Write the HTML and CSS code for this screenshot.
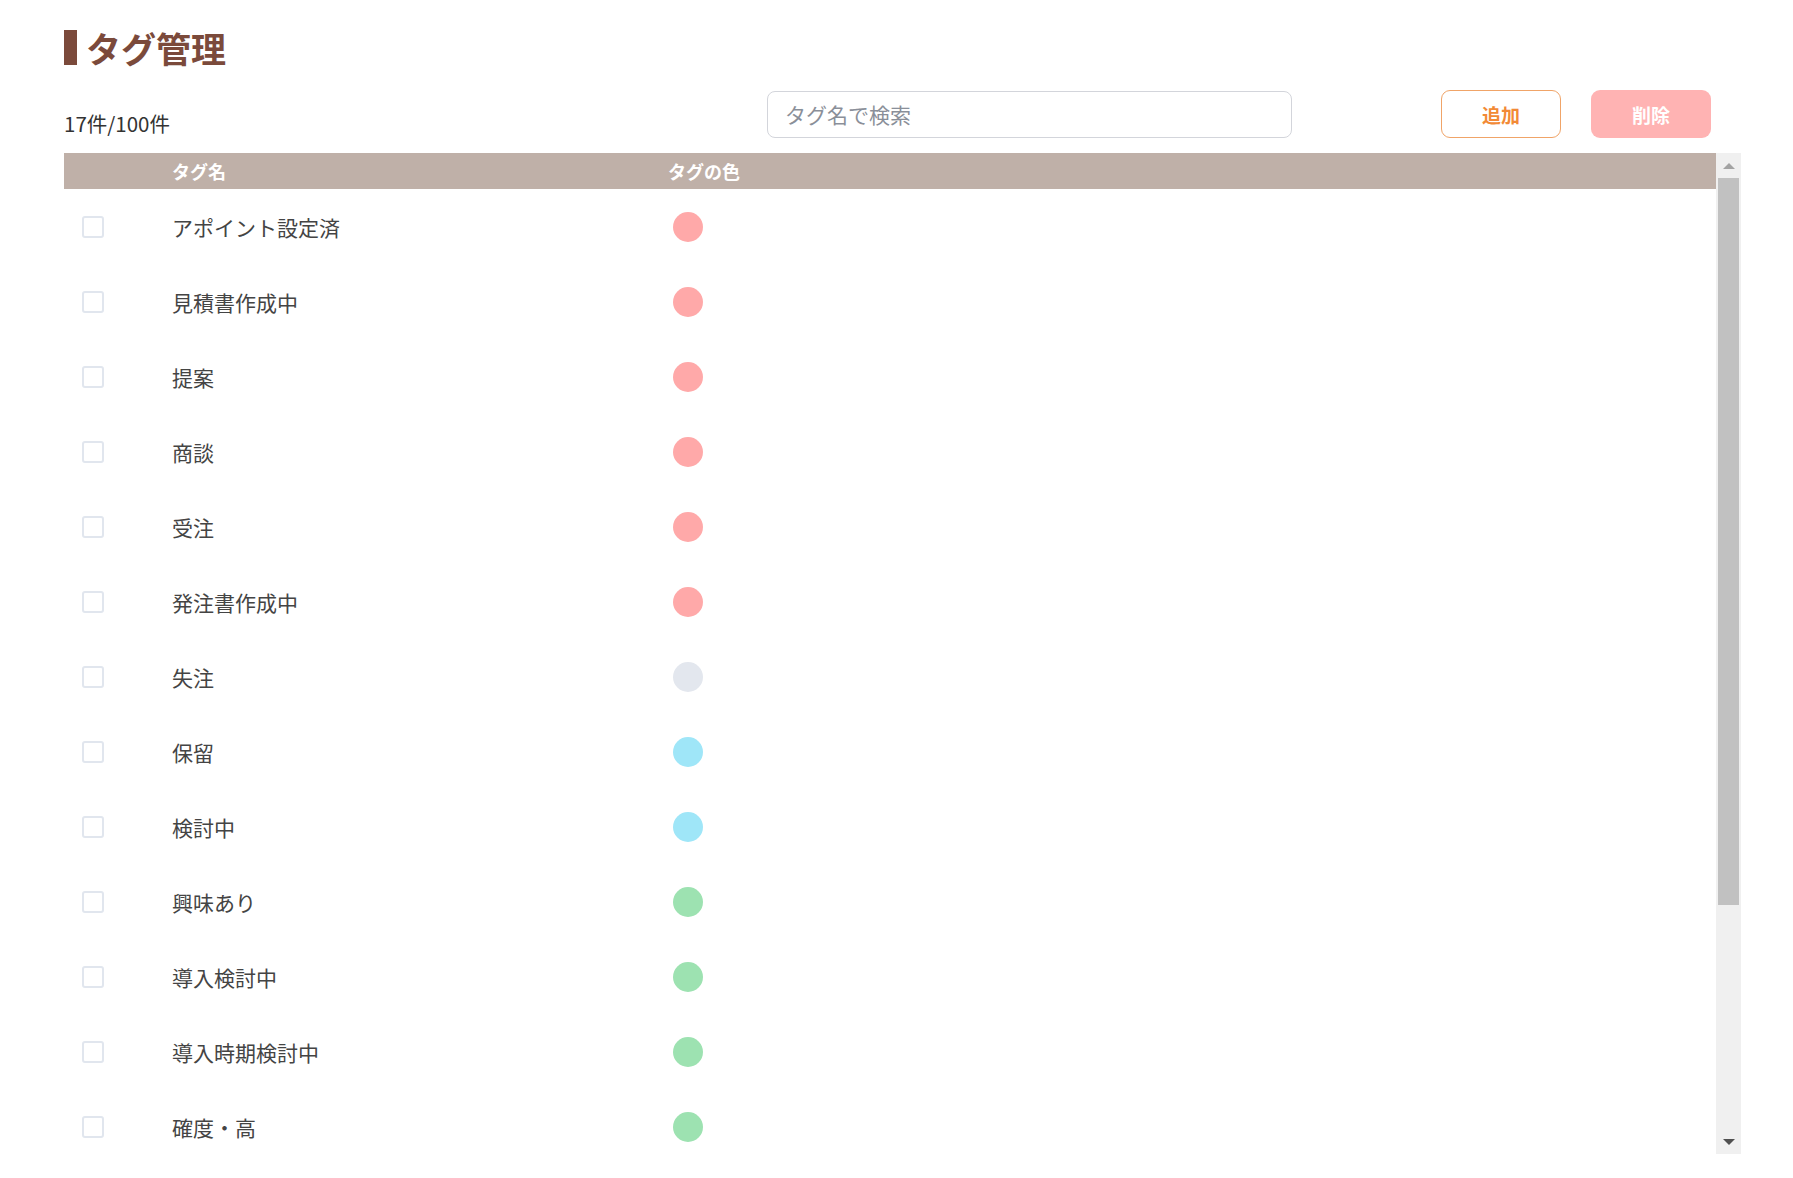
FILE: index.html
```html
<!DOCTYPE html>
<html lang="ja">
<head>
  <meta charset="UTF-8" />
  <meta name="viewport" content="width=device-width, initial-scale=1.0" />
  <title>タグ管理</title>
  <link rel="stylesheet" href="styles.css">
</head>
<body>
  <div class="page">
    <h1 class="page-title">タグ管理</h1>

    <div class="toolbar">
      <div class="count">17件/100件</div>
      <input class="search" type="text" placeholder="タグ名で検索" />
      <div class="actions">
        <button class="btn btn-add">追加</button>
        <button class="btn btn-delete">削除</button>
      </div>
    </div>

    <div class="table-wrap">
      <div class="tag-table">
        <div class="tag-head">
          <div></div>
          <div>タグ名</div>
          <div>タグの色</div>
        </div>

        <div class="tag-row">
          <div><span class="check"></span></div>
          <div class="tag-name">アポイント設定済</div>
          <div><span class="dot pink"></span></div>
        </div>
        <div class="tag-row">
          <div><span class="check"></span></div>
          <div class="tag-name">見積書作成中</div>
          <div><span class="dot pink"></span></div>
        </div>
        <div class="tag-row">
          <div><span class="check"></span></div>
          <div class="tag-name">提案</div>
          <div><span class="dot pink"></span></div>
        </div>
        <div class="tag-row">
          <div><span class="check"></span></div>
          <div class="tag-name">商談</div>
          <div><span class="dot pink"></span></div>
        </div>
        <div class="tag-row">
          <div><span class="check"></span></div>
          <div class="tag-name">受注</div>
          <div><span class="dot pink"></span></div>
        </div>
        <div class="tag-row">
          <div><span class="check"></span></div>
          <div class="tag-name">発注書作成中</div>
          <div><span class="dot pink"></span></div>
        </div>
        <div class="tag-row">
          <div><span class="check"></span></div>
          <div class="tag-name">失注</div>
          <div><span class="dot gray"></span></div>
        </div>
        <div class="tag-row">
          <div><span class="check"></span></div>
          <div class="tag-name">保留</div>
          <div><span class="dot cyan"></span></div>
        </div>
        <div class="tag-row">
          <div><span class="check"></span></div>
          <div class="tag-name">検討中</div>
          <div><span class="dot cyan"></span></div>
        </div>
        <div class="tag-row">
          <div><span class="check"></span></div>
          <div class="tag-name">興味あり</div>
          <div><span class="dot green"></span></div>
        </div>
        <div class="tag-row">
          <div><span class="check"></span></div>
          <div class="tag-name">導入検討中</div>
          <div><span class="dot green"></span></div>
        </div>
        <div class="tag-row">
          <div><span class="check"></span></div>
          <div class="tag-name">導入時期検討中</div>
          <div><span class="dot green"></span></div>
        </div>
        <div class="tag-row">
          <div><span class="check"></span></div>
          <div class="tag-name">確度・高</div>
          <div><span class="dot green"></span></div>
        </div>
      </div>

      <!-- scrollbar drawn by hand: headless browser hides the native one -->
      <div class="scrollbar">
        <div class="sb-btn"><span class="arrow-up"></span></div>
        <div class="sb-track"><div class="sb-thumb"></div></div>
        <div class="sb-btn"><span class="arrow-down"></span></div>
      </div>
    </div>
  </div>
</body>
</html>
```

FILE: styles.css
```css
body {
  margin: 0;
  padding: 0;
  background: #fff;
  color: #333;
  font-family: "Noto Sans CJK JP", "Noto Sans", sans-serif;
}

.page {
  padding: 30px 52px 0 64px;
}

.page-title {
  margin: 0;
  height: 35px;
  display: flex;
  align-items: center;
  gap: 9px;
  font-size: 35px;
  font-weight: 700;
  line-height: 1;
  color: #7b4a3b;
}

.page-title::before {
  content: "";
  width: 13px;
  height: 35px;
  background: #7b4a3b;
}

.toolbar {
  display: flex;
  align-items: center;
  margin-top: 25px;
  height: 48px;
  padding-right: 30px;
}

.count {
  width: 703px;
  font-size: 20.5px;
  color: #333;
  padding-top: 17px;
}

.search {
  width: 525px;
  height: 47px;
  box-sizing: border-box;
  padding: 0 17px;
  border: 1px solid #d3d5db;
  border-radius: 8px;
  font-family: inherit;
  font-size: 21px;
  color: #333;
  outline: none;
}

.search::placeholder {
  color: #8a8f99;
}

.actions {
  margin-left: auto;
  display: flex;
  gap: 30px;
}

.btn {
  width: 120px;
  height: 48px;
  border-radius: 9px;
  font-family: inherit;
  font-size: 19px;
  font-weight: 700;
  cursor: pointer;
}

.btn-add {
  background: #fff;
  border: 1px solid #f0a468;
  color: #f28a36;
}

.btn-delete {
  background: #ffb3b3;
  border: none;
  color: #fff;
}

.table-wrap {
  margin-top: 15px;
  height: 1001px;
  display: flex;
}

.tag-table {
  flex: 1;
  overflow: hidden;
}

.tag-head,
.tag-row {
  display: grid;
  grid-template-columns: 108px 496px 1fr;
  align-items: center;
}

.tag-head {
  height: 36px;
  background: #bfb0a8;
  color: #fff;
  font-size: 18px;
  font-weight: 700;
}

.tag-row {
  height: 75px;
}

.check {
  display: block;
  width: 22px;
  height: 22px;
  box-sizing: border-box;
  margin-left: 18px;
  border: 2px solid #e1e6ee;
  border-radius: 3px;
}

.tag-name {
  font-size: 21px;
  color: #444;
}

.dot {
  display: block;
  width: 30px;
  height: 30px;
  margin-left: 5px;
  border-radius: 50%;
}

.pink {
  background: #ffa9a9;
}

.gray {
  background: #e3e7ee;
}

.cyan {
  background: #9fe6f8;
}

.green {
  background: #9de2b1;
}

.scrollbar {
  width: 25px;
  display: flex;
  flex-direction: column;
  background: #f0f0f0;
}

.sb-btn {
  height: 25px;
  display: flex;
  align-items: center;
  justify-content: center;
}

.sb-track {
  flex: 1;
  padding: 0 2px;
}

.sb-thumb {
  height: 727px;
  background: #c1c1c1;
}

.arrow-up {
  border-left: 6px solid transparent;
  border-right: 6px solid transparent;
  border-bottom: 6px solid #a3a3a3;
}

.arrow-down {
  border-left: 6px solid transparent;
  border-right: 6px solid transparent;
  border-top: 6px solid #505050;
}
```
